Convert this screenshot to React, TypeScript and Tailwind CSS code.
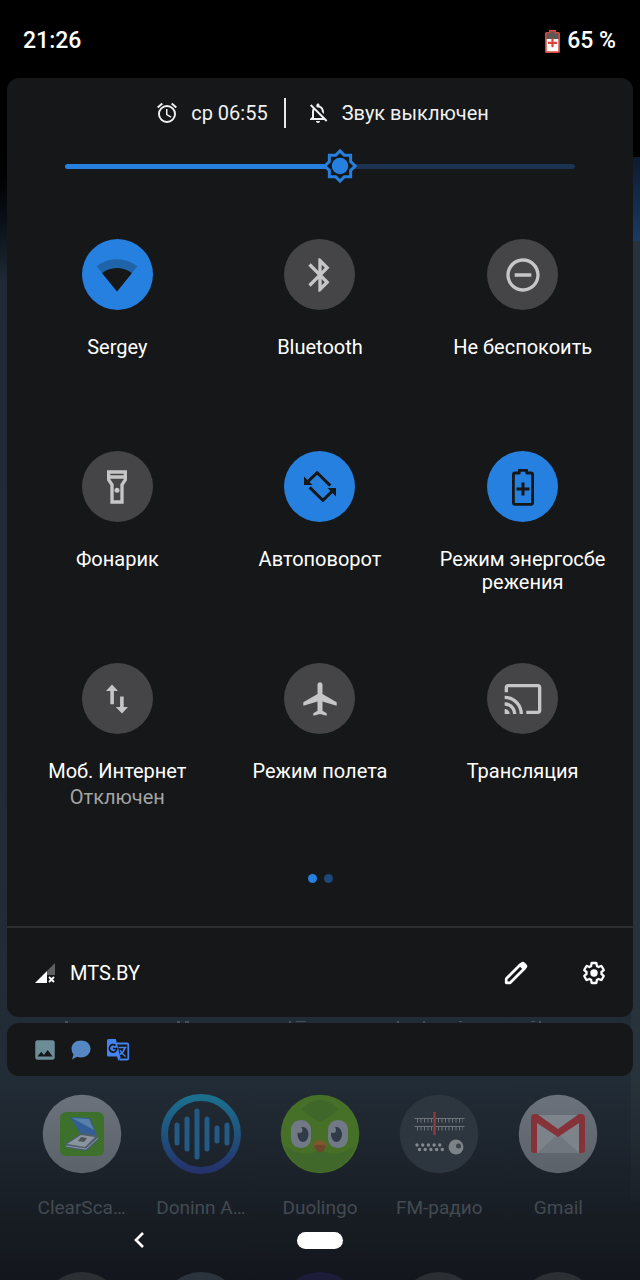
import { useState } from "react";
import type { ReactNode } from "react";
import {
  MdAirplanemodeActive,
  MdBluetooth,
  MdCast,
  MdImage,
  MdOutlineAlarm,
  MdOutlineDoNotDisturbOn,
  MdOutlineFlashlightOn,
  MdOutlineNotificationsOff,
} from "react-icons/md";

function BatteryStatusIcon() {
  return (
    <svg viewBox="0 0 15 23" className="h-[23px] w-[15px]" aria-hidden="true">
      <path d="M4 0h7v2h2.500q1.500 0 1.500 1.500V21.500q0 1.500-1.500 1.500h-12Q0 23 0 21.500V3.500Q0 2 1.500 2H4z" fill="#d9443c" />
      <path d="M5.300 1.500h4.400v2h3.600v5.500H1.700V3.500h3.600z" fill="#5c5856" />
      <path d="M1.700 9h11.600v12.300H1.700z" fill="#fff" />
      <path d="M6.400 8.500h2.200v3.300H12v2.200H8.600v3.300H6.400V14H3v-2.200h3.400z" fill="#d9443c" />
    </svg>
  );
}

function WifiIcon() {
  return (
    <svg viewBox="0 0 24 24" className="size-[42px]" aria-hidden="true">
      <path
        d="M12.010 21.490L23.640 7c-.45-.34-4.930-4-11.640-4C5.280 3 .81 6.660.36 7l11.630 14.490.01.01.01-.01z"
        fill="#1f64a9"
      />
      <path
        d="M3.530 10.950l8.460 10.540.01.01.01-.01 8.460-10.540C20.040 10.620 16.810 8 12 8c-4.810 0-8.040 2.620-8.470 2.950z"
        fill="#151718"
      />
    </svg>
  );
}

function RotateIcon() {
  return (
    <svg viewBox="0 0 36 37" className="h-[37px] w-9" fill="none" aria-hidden="true">
      <g stroke="#151718" strokeWidth="3" strokeLinejoin="round">
        <path d="M5 14.500L15.200 4.700 28.300 17.600" />
        <path d="M31 22.500L20.800 32.300 7.700 19.400" />
      </g>
      <path d="M2 8.500L10.500 17H2zM34 28.500L25.500 20H34z" fill="#151718" />
    </svg>
  );
}

function BatterySaverIcon() {
  return (
    <svg viewBox="0 0 24 40" className="h-10 w-6" fill="none" aria-hidden="true">
      <path
        d="M8.300 6V3.300h7.400V6h4.300q1.600 0 1.600 1.600v28.200q0 1.600-1.600 1.600H4q-1.600 0-1.600-1.600V7.600Q2.400 6 4 6z"
        stroke="#151718"
        strokeWidth="2.800"
        strokeLinejoin="round"
      />
      <path d="M12 15.500v13M5.500 22h13" stroke="#151718" strokeWidth="3" />
    </svg>
  );
}

function MobileDataIcon() {
  return (
    <svg viewBox="0 0 40 40" className="size-10" fill="currentColor" aria-hidden="true">
      <path d="M15 5.500l6 6.500h-4.100v13.200h-3.600V12H9zM25 34.500l-6.200-6.500h4.300V17.500h3.600V28h4.300z" />
    </svg>
  );
}

function SignalIcon() {
  return (
    <svg viewBox="0 0 20 20" className="size-5" aria-hidden="true">
      <path d="M20 0v12h-8V8z" fill="#5f6061" />
      <path d="M12 8v12H0z" fill="#fff" />
      <path d="M14 14l5 5M19 14l-5 5" stroke="#fff" strokeWidth="1.800" />
    </svg>
  );
}

function PencilIcon() {
  return (
    <svg viewBox="0 0 24 24" className="size-6" aria-hidden="true">
      <path d="M2.200 21.800v-4L16.200 3.800l4 4L6.200 21.800z" fill="none" stroke="#fff" strokeWidth="2.700" strokeLinejoin="round" />
      <path d="M14.500 4l2.300-2.300a2.800 2.800 0 0 1 4 0l1.500 1.500a2.800 2.800 0 0 1 0 4L20 9.500z" fill="#fff" />
    </svg>
  );
}

function GearIcon() {
  return (
    <svg viewBox="0 0 24 24" className="size-6" aria-hidden="true">
      <path
        d="M19.430 12.980c.04-.32.07-.64.07-.98s-.03-.66-.07-.98l2.110-1.650c.19-.15.24-.42.12-.64l-2-3.460c-.12-.22-.39-.3-.61-.22l-2.490 1c-.52-.4-1.080-.73-1.690-.98l-.38-2.650C14.460 2.180 14.250 2 14 2h-4c-.25 0-.46.18-.49.42l-.38 2.650c-.61.25-1.170.59-1.690.98l-2.490-1c-.23-.09-.49 0-.61.22l-2 3.460c-.13.22-.07.49.12.64l2.110 1.650c-.04.32-.07.65-.07.98s.03.66.07.98l-2.110 1.650c-.19.15-.24.42-.12.64l2 3.460c.12.22.39.3.61.22l2.490-1c.52.4 1.080.73 1.690.98l.38 2.650c.03.24.24.42.49.42h4c.25 0 .46-.18.49-.42l.38-2.650c.61-.25 1.170-.59 1.690-.98l2.490 1c.23.09.49 0 .61-.22l2-3.460c.12-.22.07-.49-.12-.64z"
        fill="none"
        stroke="#fff"
        strokeWidth="2.300"
        strokeLinejoin="round"
      />
      <circle cx="12" cy="12" r="3.700" fill="#fff" />
    </svg>
  );
}

function TranslateIcon() {
  return (
    <svg viewBox="0 0 24 24" className="size-6" fill="none" aria-hidden="true">
      <path d="M11 5.500h10q1.300 0 1.300 1.300v13.400q0 1.300-1.300 1.300h-7.500" stroke="#4583ee" strokeWidth="1.800" />
      <path d="M2.500 1h7.300l4.700 18.500-2 3-1.500-4H2.500Q1 18.500 1 17V2.500Q1 1 2.500 1z" fill="#4583ee" />
      <path d="M11.500 18.500h3l-2 4.500z" fill="#4583ee" />
      <path d="M9.500 7.500A3.700 3.700 0 1 0 10.800 10.500H7" stroke="#151718" strokeWidth="1.700" />
      <path d="M12.500 9.500h8M19 9.500q-1 4.500-5 7M14 12q2 4 5.500 6.500" stroke="#4583ee" strokeWidth="1.500" />
    </svg>
  );
}

function SunIcon() {
  return (
    <svg viewBox="0 0 24 24" className="size-9" aria-hidden="true">
      <path
        d="M12 1.900 14.900 4.900H19.100v4.200L22.100 12 19.100 14.900v4.200h-4.200L12 22.100 9.100 19.100H4.900v-4.200L1.900 12 4.900 9.100V4.900h4.200z"
        fill="#151718"
        stroke="#2680e0"
        strokeWidth="2"
      />
      <circle cx="12" cy="12" r="5.500" fill="#2680e0" />
    </svg>
  );
}

type Tile = { label: string; detail?: string; active?: boolean; icon: ReactNode };

const tiles: Tile[] = [
  { label: "Sergey", active: true, icon: <WifiIcon /> },
  { label: "Bluetooth", icon: <MdBluetooth size={40} /> },
  { label: "Не беспокоить", icon: <MdOutlineDoNotDisturbOn size={40} /> },
  { label: "Фонарик", icon: <MdOutlineFlashlightOn size={40} /> },
  { label: "Автоповорот", active: true, icon: <RotateIcon /> },
  { label: "Режим энергосбережения", active: true, icon: <BatterySaverIcon /> },
  { label: "Моб. Интернет", detail: "Отключен", icon: <MobileDataIcon /> },
  { label: "Режим полета", icon: <MdAirplanemodeActive size={40} /> },
  { label: "Трансляция", icon: <MdCast size={40} /> },
];

function QuickTile({ tile }: { tile: Tile }) {
  return (
    <button type="button" aria-pressed={!!tile.active} className="flex flex-col items-center justify-start px-4">
      <span
        className={
          tile.active
            ? "flex size-[71px] shrink-0 items-center justify-center rounded-full bg-[#2680e0]"
            : "flex size-[71px] shrink-0 items-center justify-center rounded-full bg-[#454547] text-[#c6c6c7]"
        }
      >
        {tile.icon}
      </span>
      <span className="mt-[26px] text-center text-[20px] leading-[23px] break-all">{tile.label}</span>
      {tile.detail && <span className="mt-[3px] text-[20px] leading-[23px] text-[#a3a4a4]">{tile.detail}</span>}
    </button>
  );
}

function Brightness() {
  const [value, setValue] = useState(54);
  return (
    <div className="relative mx-[58px] mt-5 flex h-9 items-center">
      <span className="h-[5px] w-full overflow-hidden rounded-full bg-[#1c3353]">
        <span className="block h-full bg-[#2680e0]" style={{ width: `${value}%` }} />
      </span>
      <span className="absolute top-0 -translate-x-1/2" style={{ left: `${value}%` }}>
        <SunIcon />
      </span>
      <input
        type="range"
        aria-label="Яркость"
        min={0}
        max={100}
        value={value}
        onChange={(e) => setValue(Number(e.target.value))}
        className="absolute inset-0 w-full opacity-0"
      />
    </div>
  );
}

function ScannerIcon() {
  return (
    <svg viewBox="0 0 80 80" className="size-20" aria-hidden="true">
      <circle cx="40" cy="40" r="39.300" fill="url(#disc)" />
      <rect x="18" y="18" width="44" height="44" rx="6" fill="#3d702a" />
      <path d="M28 23l20 1 7 18-17-3z" fill="#335f96" />
      <path d="M30 24l17 1 5 11z" fill="#587fa9" />
      <path d="M39 39l17 2v5L45 57l-20-3-2-4z" fill="#4c5c70" />
      <path d="M39 41l14 2-10 10-18-3z" fill="#8a949d" />
      <path d="M39 43l6 1-3 4-6-1z" fill="#4d5358" />
      <path d="M24 52l20 3 12-11" fill="none" stroke="#8d9ba8" />
    </svg>
  );
}

function WaveIcon() {
  return (
    <svg viewBox="0 0 80 80" className="size-20" fill="none" aria-hidden="true">
      <defs>
        <linearGradient id="ring" x1="0" y1="0" x2="0" y2="1">
          <stop offset="0" stopColor="#1b6f8d" />
          <stop offset="0.500" stopColor="#1f527f" />
          <stop offset="1" stopColor="#24336a" />
        </linearGradient>
      </defs>
      <circle cx="40" cy="40" r="36.500" stroke="url(#ring)" strokeWidth="7" />
      <g stroke="#235b86" strokeWidth="5" strokeLinecap="round">
        <path d="M16 31v18M26 25v30M36 17v46M46 25v30M56 34v13M66 31v18" />
      </g>
    </svg>
  );
}

function OwlIcon() {
  return (
    <svg viewBox="0 0 80 80" className="size-20" aria-hidden="true">
      <circle cx="40" cy="40" r="39.300" fill="#466f28" />
      <path d="M22 15q9 10 18 12 9-2 18-12-8-9-18-9t-18 9z" fill="#3f672a" />
      <path d="M5 52q20 14 35 3 15 11 35-3-8 25-35 26Q13 77 5 52z" fill="#40682a" />
      <rect x="11" y="26" width="20" height="28" rx="9.500" fill="#727986" />
      <rect x="48" y="26" width="20" height="28" rx="9.500" fill="#727986" />
      <ellipse cx="23" cy="40.500" rx="5.500" ry="7.500" fill="#303b48" />
      <ellipse cx="56.500" cy="40.500" rx="5.500" ry="7.500" fill="#303b48" />
      <circle cx="19.500" cy="36" r="3" fill="#727986" />
      <circle cx="53" cy="36" r="3" fill="#727986" />
      <path d="M34 49q5-6 11 0l2 3q-3 6-7 6t-7-6z" fill="#80562c" />
      <path d="M34 52q6-2 12 0-2 6-6 6t-6-6z" fill="#69462c" />
    </svg>
  );
}

function RadioIcon() {
  return (
    <svg viewBox="0 0 80 80" className="size-20" aria-hidden="true">
      <circle cx="40" cy="40" r="39.300" fill="#2d363f" />
      <g stroke="#6e747a" fill="none">
        <path d="M15.500 24.500h50M15.500 32.500h50" />
        <path d="M18 26.500h46M18 34.500h46" strokeWidth="4" strokeDasharray="1 2.500" />
      </g>
      <path d="M35.500 18v23" stroke="#8a3b3d" strokeWidth="2.500" />
      <g stroke="#868a8f" strokeWidth="3.400" strokeLinecap="round" strokeDasharray="0 5.700">
        <path d="M18 51h24M20.500 55.500h24" />
      </g>
      <circle cx="57" cy="53" r="7.500" fill="#7d8287" />
      <circle cx="59.500" cy="52" r="2.500" fill="#3b434b" />
    </svg>
  );
}

function MailIcon() {
  return (
    <svg viewBox="0 0 80 80" className="size-20" aria-hidden="true">
      <circle cx="40" cy="40" r="39.300" fill="url(#disc)" />
      <path d="M16 21h48v38H16z" fill="#7d838a" />
      <path d="M19 59l21-19 21 19z" fill="#71777e" />
      <path d="M13 24q0-4 4-4h2l21 15 21-15h2q4 0 4 4v32q0 3-3 3h-3V29L40 43 19 29v30h-3q-3 0-3-3z" fill="#853338" />
    </svg>
  );
}

const apps = [
  { name: "ClearSca…", icon: <ScannerIcon /> },
  { name: "Doninn A…", icon: <WaveIcon /> },
  { name: "Duolingo", icon: <OwlIcon /> },
  { name: "FM-радио", icon: <RadioIcon /> },
  { name: "Gmail", icon: <MailIcon /> },
];

export default function App() {
  return (
    <main className="relative flex min-h-screen flex-col overflow-hidden bg-linear-to-b from-black from-10% via-[#1f2a36] via-22% to-[#222c36] to-85% font-['Roboto','Noto_Sans',sans-serif] text-white">
      <svg className="absolute size-0" aria-hidden="true">
        <linearGradient id="disc" x1="0" y1="0" x2="0" y2="1">
          <stop offset="0" stopColor="#6b727b" />
          <stop offset="1" stopColor="#5c626a" />
        </linearGradient>
      </svg>
      <div className="absolute top-[157px] right-0 h-[84px] w-5 bg-linear-to-b from-[#0c1c30] to-[#1b3a62]" />
      <div className="absolute top-[241px] right-0 h-[960px] w-[9px] rounded-b bg-[#28323b]" />
      <div className="absolute inset-x-0 bottom-0 h-[200px] bg-linear-to-b from-transparent to-[#13161c]" />

      <header className="relative flex h-[78px] items-center justify-between pt-1 pr-6 pl-[23px] text-[23px] font-medium">
        <time>21:26</time>
        <div className="flex items-center gap-[7px]">
          <BatteryStatusIcon />
          <span>65 %</span>
        </div>
      </header>

      <section className="relative mx-[7px] rounded-xl bg-[#151718]">
        <div className="flex justify-center pt-5 pl-1">
          <div className="flex h-[30px] items-center text-[20px] text-[#f1f1f1]">
            <MdOutlineAlarm size={24} />
            <span className="ml-3">ср 06:55</span>
            <span className="mr-5 ml-4 h-[30px] w-[2px] bg-[#e8e8e8]" />
            <MdOutlineNotificationsOff size={24} />
            <span className="ml-3">Звук выключен</span>
          </div>
        </div>
        <Brightness />
        <div className="mx-[9px] mt-[55px] grid auto-rows-[200px] grid-cols-3 gap-y-3">
          {tiles.map((tile) => (
            <QuickTile key={tile.label} tile={tile} />
          ))}
        </div>
        <div className="mt-[11px] flex justify-center gap-[7px]">
          <span className="size-[9px] rounded-full bg-[#2680e0]" />
          <span className="size-[9px] rounded-full bg-[#1d4776]" />
        </div>
        <footer className="mt-[43px] flex h-[91px] items-center border-t-2 border-[#2c2e2f] pr-[27px] pl-7">
          <SignalIcon />
          <span className="ml-[15px] text-[20px]">MTS.BY</span>
          <button type="button" aria-label="Изменить" className="ml-auto">
            <PencilIcon />
          </button>
          <button type="button" aria-label="Настройки" className="ml-[54px]">
            <GearIcon />
          </button>
        </footer>
      </section>

      <svg viewBox="0 0 640 6" className="relative h-[6px] w-full" fill="#46505a" aria-hidden="true">
        <path d="M65 4h3v2h-3zM177 4h3v2h-3zM185 4h4v2h-4zM289 4h2v2h-2zM296 4h10v1h-10zM397 4h2v2h-2zM423 4h2v2h-2zM459 4h3v1h-3zM531 4h4v1h-4zM539 4h2v2h-2z" />
      </svg>

      <section className="relative mx-[7px] flex h-[53px] items-center gap-3 rounded-xl bg-[#151718] pl-[25px]">
        <MdImage size={26} color="#6c8d98" />
        <svg viewBox="0 0 22 22" className="size-[22px]" aria-hidden="true">
          <path d="M11 1.500c5.500 0 9.500 3.500 9.500 8.300s-4 8.700-9.500 8.700q-2.300 0-4-.700L2 20.500l1.500-5Q1.500 13 1.500 9.800C1.500 5 5.500 1.500 11 1.500z" fill="#5588c2" />
        </svg>
        <span className="ml-[2px]">
          <TranslateIcon />
        </span>
      </section>

      <nav className="relative mt-[18px] grid grid-cols-5 px-[22px]">
        {apps.map((app) => (
          <a key={app.name} href="#" className="flex flex-col items-center text-[19px] leading-6 text-[#434a51]">
            {app.icon}
            <span className="mt-[22px]">{app.name}</span>
          </a>
        ))}
      </nav>

      <div className="relative mt-2 grid h-6 grid-cols-3 items-center px-12">
        <button type="button" aria-label="Назад" className="justify-self-center">
          <svg viewBox="0 0 12 18" className="h-[18px] w-3" fill="none" stroke="#fff" strokeWidth="2.600" aria-hidden="true">
            <path d="M10 2L3 9l7 7" />
          </svg>
        </button>
        <button type="button" aria-label="Домой" className="h-[17px] w-[46px] justify-self-center rounded-full bg-white" />
      </div>

      <div className="relative mt-auto grid h-2 grid-cols-5 justify-items-center overflow-hidden px-[22px]">
        <span className="size-20 rounded-full bg-[#2d3033]" />
        <span className="size-20 rounded-full bg-[#2b343c]" />
        <span className="size-20 rounded-full bg-[#1d1d3a]" />
        <span className="size-20 rounded-full bg-[#2b2e33]" />
        <span className="size-20 rounded-full bg-[#2d3033]" />
      </div>
    </main>
  );
}
